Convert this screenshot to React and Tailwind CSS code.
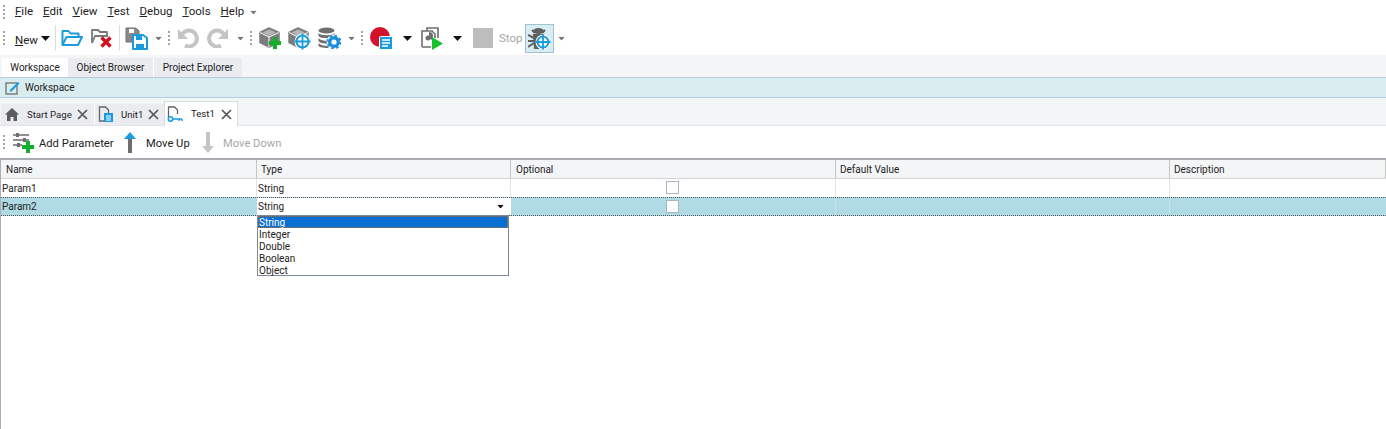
import React from "react";

const Grip = ({ className = "" }) => (
  <div className={`flex flex-col gap-[2px] w-[2px] shrink-0 ${className}`}>
    {[0, 1, 2, 3].map((i) => (
      <div key={i} className="w-[2px] h-[2px] bg-[#a3a3a3]" />
    ))}
  </div>
);

const Caret = ({ className = "", dark = false }) => (
  <svg width="9" height="5" viewBox="0 0 9 5" className={`shrink-0 ${className}`}>
    <path d="M0 0h9L4.500 5z" fill={dark ? "#111" : "#777"} />
  </svg>
);

const Plus = ({ x = 0, y = 0 }) => (
  <path d={`M${x + 4} ${y}h4v4h4v4h-4v4h-4v-4h-4v-4h4z`} fill="#0fb02c" />
);

const Target = ({ cx, cy, r = 6 }) => (
  <g>
    <circle cx={cx} cy={cy} r={r + 2} fill="#fff" />
    <circle cx={cx} cy={cy} r={r} fill="#fff" stroke="#1a9be0" strokeWidth="2" />
    <path d={`M${cx} ${cy - r - 2}v${2 * r + 4}M${cx - r - 2} ${cy}h${2 * r + 4}`} stroke="#1a9be0" strokeWidth="1.800" />
  </g>
);

const Box = () => (
  <g>
    <path d="M1 5.500L10 1l10 4.500v10L10 20 1 15.500z" fill="#7d7d7d" stroke="#7d7d7d" strokeWidth="1.500" strokeLinejoin="round" />
    <path d="M3.500 5.500L10 2.500l7 3-7 3.500z" fill="#b5b5b5" />
    <path d="M10 10v10M1 5.500L10 10l10-4.500" stroke="#fff" strokeWidth="1" fill="none" />
  </g>
);

const OpenIcon = () => (
  <svg width="22" height="18" viewBox="0 0 22 18" fill="none" strokeWidth="2" stroke="#1a9be0" strokeLinejoin="round">
    <path d="M1.500 16V2h6l2 2.500h8V8" />
    <path d="M1.500 16L5.500 8H21l-4 8z" />
  </svg>
);

const CloseFolderIcon = () => (
  <svg width="22" height="20" viewBox="0 0 22 20" fill="none">
    <path d="M1 15V2h6l2 2h7v4M1 15l3-7h13" stroke="#7a7a7a" strokeWidth="1.800" strokeLinejoin="round" />
    <path d="M10.500 9.500l9 9M19.500 9.500l-9 9" stroke="#d3121f" strokeWidth="3.400" />
  </svg>
);

const SaveIcon = () => (
  <svg width="23" height="23" viewBox="0 0 23 23" fill="none">
    <path d="M1 1h10l3 3v4H7v7H1z" fill="#8a8a8a" stroke="#6e6e6e" />
    <path d="M4 2h5v4H4z" fill="#fff" />
    <path d="M8 8h10l4 3v11H8z" fill="#fff" stroke="#1a9be0" strokeWidth="2" strokeLinejoin="round" />
    <path d="M11 9h6v4h-6zM11 17h8v5h-8z" fill="#1a9be0" />
  </svg>
);

const UndoIcon = ({ flip = false }) => (
  <svg width="21" height="20" viewBox="0 0 21 20" fill="none" className={flip ? "-scale-x-100" : ""}>
    <path d="M4 6.500A8 8 0 1 1 7 17.500" stroke="#c4c4c4" strokeWidth="4" />
    <path d="M0 1v10h10z" fill="#c4c4c4" />
  </svg>
);

const BoxPlusIcon = () => (
  <svg width="23" height="23" viewBox="0 0 23 23">
    <Box />
    <Plus x={10} y={10} />
  </svg>
);

const BoxTargetIcon = () => (
  <svg width="23" height="23" viewBox="0 0 23 23">
    <Box />
    <Target cx={14.500} cy={14.500} />
  </svg>
);

const DbGearIcon = () => (
  <svg width="23" height="22" viewBox="0 0 23 22">
    <ellipse cx="8.500" cy="3.500" rx="8" ry="3" fill="#6e6e6e" />
    <path d="M.5 6c2 3 14 3 16 0v3c-2 3-14 3-16 0zM.5 11c2 3 10 3 10 3v3s-8 0-10-3zM.5 16c2 3 10 3 10 3v2s-8 0-10-2z" fill="#6e6e6e" />
    <circle cx="16" cy="15" r="7.500" fill="#fff" />
    <circle cx="16" cy="15" r="4.300" fill="none" stroke="#1a8fdc" strokeWidth="3.400" />
    <circle cx="16" cy="15" r="6.400" fill="none" stroke="#1a8fdc" strokeWidth="2" strokeDasharray="2.500 2.500" />
  </svg>
);

const RecordIcon = () => (
  <svg width="23" height="23" viewBox="0 0 23 23">
    <circle cx="10" cy="10" r="10" fill="#d2112a" />
    <rect x="9.500" y="9.500" width="13" height="13" rx="1" fill="#1a9be0" stroke="#fff" />
    <path d="M12 13h8M12 16h8M12 19h6" stroke="#fff" strokeWidth="1.300" />
  </svg>
);

const RunIcon = () => (
  <svg width="23" height="23" viewBox="0 0 23 23" fill="none">
    <path d="M6 4V1h11v10" stroke="#6e6e6e" strokeWidth="1.600" />
    <path d="M1 20V4h10l3 3v4M1 20h9" fill="#fff" stroke="#6e6e6e" strokeWidth="1.600" />
    <path d="M8 5c4 0 5 3 3 8l-3-2z" fill="#6e6e6e" />
    <circle cx="7" cy="11" r="2.500" fill="#6e6e6e" />
    <path d="M11 10l11 6.500L11 23z" fill="#16c22c" />
  </svg>
);

const BugIcon = () => (
  <svg width="23" height="23" viewBox="0 0 23 23" fill="none">
    <path d="M4 3l3 3M17 3l-3 3M0 8l6 3M0 20l6-4M0 14h6" stroke="#5f5f5f" strokeWidth="2" />
    <ellipse cx="10.500" cy="4" rx="5.500" ry="3" fill="#5f5f5f" />
    <path d="M5 7h11v5l-5 10H6z" fill="#5f5f5f" />
    <Target cx={15} cy={15} r={5.500} />
  </svg>
);

const MenuItem = ({ u, rest }) => (
  <span className="text-[11.500px] text-[#222]">
    <span className="underline">{u}</span>
    {rest}
  </span>
);

const DocTabIcon = ({ keyIcon = false }) => (
  <svg width="16" height="17" viewBox="0 0 16 17" fill="none">
    <path d="M1.500 11V1h6l3 3v4" stroke="#666" strokeWidth="1.300" />
    {keyIcon ? (
      <g>
        <circle cx="3.500" cy="13" r="2.200" stroke="#1a9be0" strokeWidth="1.600" />
        <path d="M6 13h9M12 13v2M15 13v2" stroke="#1a9be0" strokeWidth="1.400" />
      </g>
    ) : (
      <g>
        <path d="M1.500 10v5h5" stroke="#666" strokeWidth="1.300" />
        <rect x="6" y="7" width="9" height="9" fill="#1a9be0" />
        <path d="M8 10h5M8 12h5M8 14h5" stroke="#fff" />
      </g>
    )}
  </svg>
);

const X = () => (
  <svg width="11" height="11" viewBox="0 0 11 11">
    <path d="M1 1l9 9M10 1l-9 9" stroke="#555" strokeWidth="1.700" />
  </svg>
);

const Checkbox = () => <div className="w-[13px] h-[13px] bg-white border border-[#aab4c4]" />;

const columns = [
  { name: "Name", cls: "w-[256px] pl-[5px]" },
  { name: "Type", cls: "w-[254px] pl-[4px]" },
  { name: "Optional", cls: "w-[325px] pl-[5px]" },
  { name: "Default Value", cls: "w-[334px] pl-[4px]" },
  { name: "Description", cls: "flex-1 pl-[4px]" },
];

export default function App() {
  return (
    <div className="w-[1386px] h-[429px] bg-white overflow-hidden font-['Roboto',sans-serif] text-[#222] relative">
      {/* menu */}
      <div className="h-[23px] flex items-center pl-[3px] pt-px">
        <Grip />
        <div className="flex items-center gap-[10px] ml-[10px]">
          <MenuItem u="F" rest="ile" />
          <MenuItem u="E" rest="dit" />
          <MenuItem u="V" rest="iew" />
          <MenuItem u="T" rest="est" />
          <MenuItem u="D" rest="ebug" />
          <MenuItem u="T" rest="ools" />
          <MenuItem u="H" rest="elp" />
        </div>
        <Caret className="ml-[5px] scale-75" />
      </div>

      {/* main toolbar */}
      <div className="h-[32px] flex items-center pl-[3px] pb-[2px]">
        <Grip />
        <div className="ml-[10px] w-[22px] pt-[2px]"><MenuItem u="N" rest="ew" /></div>
        <Caret className="ml-[4px]" dark />
        <div className="w-px h-[26px] bg-[#dcdcdc] ml-[5px]" />
        <div className="ml-[5px]"><OpenIcon /></div>
        <div className="ml-[8px]"><CloseFolderIcon /></div>
        <div className="w-px h-[26px] bg-[#dcdcdc] ml-[6px]" />
        <div className="ml-[5px]"><SaveIcon /></div>
        <Caret className="ml-[6px] scale-75" />
        <Grip className="ml-[5px]" />
        <div className="ml-[8px]"><UndoIcon /></div>
        <div className="ml-[8px]"><UndoIcon flip /></div>
        <Caret className="ml-[8px] scale-75" />
        <Grip className="ml-[5px]" />
        <div className="ml-[7px]"><BoxPlusIcon /></div>
        <div className="ml-[6px]"><BoxTargetIcon /></div>
        <div className="ml-[7px]"><DbGearIcon /></div>
        <Caret className="ml-[6px] scale-75" />
        <Grip className="ml-[5px]" />
        <div className="ml-[7px]"><RecordIcon /></div>
        <Caret className="ml-[10px]" dark />
        <div className="ml-[9px]"><RunIcon /></div>
        <Caret className="ml-[9px]" dark />
        <div className="w-[20px] h-[20px] bg-[#bdbdbd] ml-[11px]" />
        <div className="w-[23px] ml-[6px] text-[11.500px] text-[#a8a8a8] pt-[2px]">Stop</div>
        <div className="w-[29px] h-[29px] bg-[#d9ecf2] border border-[#9cc3d2] ml-[3px] flex items-center justify-center">
          <BugIcon />
        </div>
        <Caret className="ml-[3px] scale-75" />
      </div>

      {/* panel tabs */}
      <div className="h-[22px] bg-[#f4f5f7] flex items-end pl-[2px]">
        <div className="h-[19px] w-[66px] bg-white flex items-center justify-center text-[10px]">Workspace</div>
        <div className="h-[19px] w-[86px] bg-[#eaecf0] flex items-center justify-center text-[10px] border-r border-[#fff]">Object Browser</div>
        <div className="h-[19px] w-[88px] bg-[#eaecf0] flex items-center justify-center text-[10px]">Project Explorer</div>
      </div>

      {/* workspace header */}
      <div className="h-[21px] bg-[#d9ecf0] border-y border-[#b3cfdf] flex items-center pl-[5px]">
        <svg width="15" height="14" viewBox="0 0 15 14" fill="none">
          <rect x="1" y="2" width="11" height="11" stroke="#666" strokeWidth="1.200" />
          <path d="M5 9l8-8 1.500 1.500-8 8H5z" fill="#1a9be0" />
        </svg>
        <span className="text-[10px] ml-[5px]">Workspace</span>
      </div>

      {/* document tabs */}
      <div className="h-[28px] bg-[#f4f5f7] border-b border-[#e2e4e8] flex items-end pl-[1px]">
        <div className="h-[21px] w-[94px] bg-[#eaecf0] flex items-center pl-[4px] border-r border-[#fff]">
          <svg width="14" height="13" viewBox="0 0 14 13" className="shrink-0">
            <path d="M7 0l7 6.500h-2V13H8.500V9h-3v4H2V6.500H0z" fill="#5c5c5c" />
          </svg>
          <span className="text-[9.600px] ml-[8px] w-[45px] pt-[2px] whitespace-nowrap">Start Page</span>
          <div className="ml-[5px]"><X /></div>
        </div>
        <div className="h-[21px] w-[69px] bg-[#eaecf0] flex items-center pl-[3px]">
          <DocTabIcon />
          <span className="text-[9.600px] ml-[7px] w-[21px] pt-[2px]">Unit1</span>
          <div className="ml-[6px]"><X /></div>
        </div>
        <div className="h-[25px] w-[74px] bg-white border border-b-0 border-[#d8dbe0] flex items-center pl-[2px] mb-[-1px]">
          <DocTabIcon keyIcon />
          <span className="text-[9.600px] ml-[8px] w-[23px]">Test1</span>
          <div className="ml-[7px]"><X /></div>
        </div>
      </div>

      {/* parameter toolbar */}
      <div className="h-[32px] flex items-center pl-[3px]">
        <Grip />
        <svg width="22" height="22" viewBox="0 0 22 22" fill="none" className="ml-[7px]">
          <path d="M1 4h16M1 9h16M1 14h9" stroke="#6e6e6e" strokeWidth="1.500" />
          <rect x="4" y="2" width="3" height="4" fill="#6e6e6e" />
          <rect x="11" y="7" width="3" height="4" fill="#6e6e6e" />
          <rect x="5" y="12" width="3" height="4" fill="#6e6e6e" />
          <Plus x={10} y={10} />
        </svg>
        <span className="text-[11.200px] ml-[5px] w-[75px] pt-[4px] whitespace-nowrap">Add Parameter</span>
        <svg width="12" height="21" viewBox="0 0 12 21" className="ml-[10px]">
          <path d="M6 0l6 7H0z" fill="#1a9be0" />
          <rect x="4" y="7" width="4" height="14" fill="#6e6e6e" />
        </svg>
        <span className="text-[11.200px] ml-[10px] w-[46px] pt-[4px] whitespace-nowrap">Move Up</span>
        <svg width="12" height="21" viewBox="0 0 12 21" className="ml-[10px]">
          <rect x="4" y="0" width="4" height="14" fill="#c4c4c4" />
          <path d="M6 21l6-7H0z" fill="#c4c4c4" />
        </svg>
        <span className="text-[11.200px] ml-[9px] pt-[4px] text-[#a8a8a8]">Move Down</span>
      </div>

      {/* grid */}
      <div className="border-l border-[#a9b0b8] h-[271px] relative">
        <div className="h-[21px] flex bg-[#f4f5f7] border-t-2 border-[#a9adb3] border-b border-b-[#d5d5d5]">
          {columns.map((c) => (
            <div key={c.name} className={`${c.cls} flex items-center text-[10px] border-r border-[#c4c4c4]`}>
              {c.name}
            </div>
          ))}
        </div>
        <div className="h-[18px] flex text-[10px]">
          <div className="w-[256px] flex items-center pl-px pt-px border-r border-[#e4e4e4]">Param1</div>
          <div className="w-[254px] flex items-center pl-px pt-px border-r border-[#e4e4e4]">String</div>
          <div className="w-[325px] flex items-center justify-center pr-[2px] pb-px border-r border-[#e4e4e4]"><Checkbox /></div>
          <div className="w-[334px] border-r border-[#e4e4e4]" />
          <div className="flex-1" />
        </div>
        <div className="h-[19px] flex text-[10px] bg-[#b0dae4] border-y border-dotted border-[#555]">
          <div className="w-[256px] flex items-center pl-px">Param2</div>
          <div className="w-[254px] bg-white flex items-center pl-px pr-[6px] justify-between">
            String
            <Caret className="scale-75" dark />
          </div>
          <div className="w-[325px] flex items-center justify-center pr-[2px] border-r border-[#c5e2ea]"><Checkbox /></div>
          <div className="w-[334px] border-r border-[#c5e2ea]" />
          <div className="flex-1" />
        </div>

        {/* dropdown list */}
        <div className="absolute left-[256px] top-[57px] w-[252px] h-[61px] bg-white border border-[#7f8a99] text-[10px] leading-[14px]">
          <div className="h-[12px] pl-px bg-[#0a6fd2] text-white outline-1 outline-dotted outline-[#c06a20] -outline-offset-1">String</div>
          <div className="h-[12px] pl-px">Integer</div>
          <div className="h-[12px] pl-px">Double</div>
          <div className="h-[12px] pl-px">Boolean</div>
          <div className="h-[12px] pl-px">Object</div>
        </div>
      </div>
    </div>
  );
}
